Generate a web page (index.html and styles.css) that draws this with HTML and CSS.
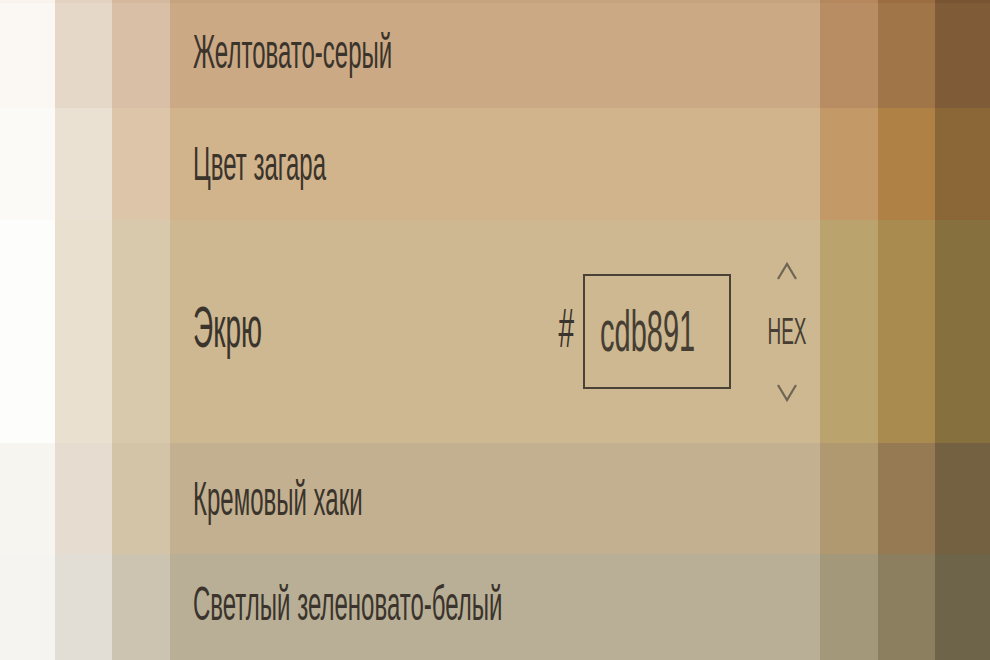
FILE: index.html
```html
<!DOCTYPE html>
<html lang="ru">
<head>
<meta charset="utf-8">
<title>Палитра</title>
<link rel="stylesheet" href="styles.css">
</head>
<body>
<div class="palette">
  <div class="c r0a"></div><div class="c r0b"></div><div class="c r0c"></div><div class="c r0m"></div><div class="c r0e"></div><div class="c r0f"></div><div class="c r0g"></div>

  <div class="c r1a"></div><div class="c r1b"></div><div class="c r1c"></div>
  <div class="c name r1m first"><span class="label">Желтовато-серый</span></div>
  <div class="c r1e"></div><div class="c r1f"></div><div class="c r1g"></div>

  <div class="c r2a"></div><div class="c r2b"></div><div class="c r2c"></div>
  <div class="c name r2m"><span class="label">Цвет загара</span></div>
  <div class="c r2e"></div><div class="c r2f"></div><div class="c r2g"></div>

  <div class="c r3a"></div><div class="c r3b"></div><div class="c r3c"></div>
  <div class="c name r3m selected">
    <span class="label big">Экрю</span>
    <span class="hash">#</span>
    <div class="hexbox"><span class="hexval">cdb891</span></div>
    <div class="spin">
      <svg class="chev" width="22" height="22" viewBox="0 0 22 22"><path d="M2 19 L11 4 L20 19" fill="none" stroke="#6f6555" stroke-width="2.2"/></svg>
      <span class="fmt">HEX</span>
      <svg class="chev down" width="22" height="22" viewBox="0 0 22 22"><path d="M2 3 L11 18 L20 3" fill="none" stroke="#6f6555" stroke-width="2.2"/></svg>
    </div>
  </div>
  <div class="c r3e"></div><div class="c r3f"></div><div class="c r3g"></div>

  <div class="c r4a"></div><div class="c r4b"></div><div class="c r4c"></div>
  <div class="c name r4m"><span class="label">Кремовый хаки</span></div>
  <div class="c r4e"></div><div class="c r4f"></div><div class="c r4g"></div>

  <div class="c r5a"></div><div class="c r5b"></div><div class="c r5c"></div>
  <div class="c name r5m last"><span class="label">Светлый зеленовато-белый</span></div>
  <div class="c r5e"></div><div class="c r5f"></div><div class="c r5g"></div>
</div>
</body>
</html>
```
FILE: styles.css
```css
html, body {
  margin: 0;
  padding: 0;
  background: #fff;
}
body {
  font-family: "Liberation Sans", Arial, sans-serif;
}
.palette {
  display: grid;
  grid-template-columns: 55px 57px 58px 650px 58px 57px 55px;
  grid-template-rows: 3px 105px 112px 223px 111px 106px;
  width: 990px;
  height: 660px;
  overflow: hidden;
}
.name {
  display: flex;
  align-items: center;
  padding-left: 23px;
  color: #3a342c;
}
.name.first { padding-bottom: 7px; }
.name.last { padding-bottom: 6px; }
.name.selected { padding-right: 12px; padding-bottom: 6px; }
.label {
  display: inline-block;
  font-size: 24px;
  line-height: 1;
  transform: scaleY(2.03);
  white-space: nowrap;
}
.label.big {
  font-size: 28px;
  flex: 1;
  transform-origin: left center;
}
.hash {
  display: inline-block;
  font-size: 28px;
  line-height: 1;
  transform: scaleY(2);
  margin-right: 9px;
}
.hexbox {
  box-sizing: border-box;
  width: 148px;
  height: 115px;
  border: 2px solid #4a4236;
  display: flex;
  align-items: center;
  padding-left: 15px;
  margin-top: 6px;
}
.hexval {
  display: inline-block;
  font-size: 29px;
  line-height: 1;
  transform: scaleY(2);
  color: #463e33;
}
.spin {
  width: 42px;
  margin-left: 35px;
  margin-top: 6px;
  display: flex;
  flex-direction: column;
  align-items: center;
}
.chev { display: block; }
.fmt {
  display: inline-block;
  font-size: 19px;
  line-height: 20px;
  transform: scaleY(1.95);
  color: #463e33;
  margin: 40px 0 40px;
}

/* row 0 (sliver of previous row) */
.r0a { background: #f9f3ee; } .r0b { background: #e3d2c2; } .r0c { background: #d5b99e; }
.r0m { background: #c6a37f; } .r0e { background: #b4875d; } .r0f { background: #9b6e42; } .r0g { background: #795433; }
/* row 1 */
.r1a { background: #fbf7f3; } .r1b { background: #e6d8c9; } .r1c { background: #d9bfa5; }
.r1m { background: #cba984; } .r1e { background: #b98d63; } .r1f { background: #a07547; } .r1g { background: #7f5b38; }
/* row 2 */
.r2a { background: #fcfaf7; } .r2b { background: #ebe1d2; } .r2c { background: #dcc5a8; }
.r2m { background: #d2b48c; } .r2e { background: #c39968; } .r2f { background: #af8145; } .r2g { background: #8b6636; }
/* row 3 */
.r3a { background: #fdfdfb; } .r3b { background: #e9e0d0; } .r3c { background: #d9c9ac; }
.r3m { background: #cdb891; } .r3e { background: #bba36d; } .r3f { background: #a98b50; } .r3g { background: #86703e; }
/* row 4 */
.r4a { background: #f6f5f0; } .r4b { background: #e6ddd0; } .r4c { background: #d3c4a8; }
.r4m { background: #c3b091; } .r4e { background: #b09870; } .r4f { background: #957a53; } .r4g { background: #736141; }
/* row 5 */
.r5a { background: #f5f4f0; } .r5b { background: #e2ded6; } .r5c { background: #ccc4b0; }
.r5m { background: #b9af97; } .r5e { background: #a3987a; } .r5f { background: #8b7f60; } .r5g { background: #6e6449; }
```
